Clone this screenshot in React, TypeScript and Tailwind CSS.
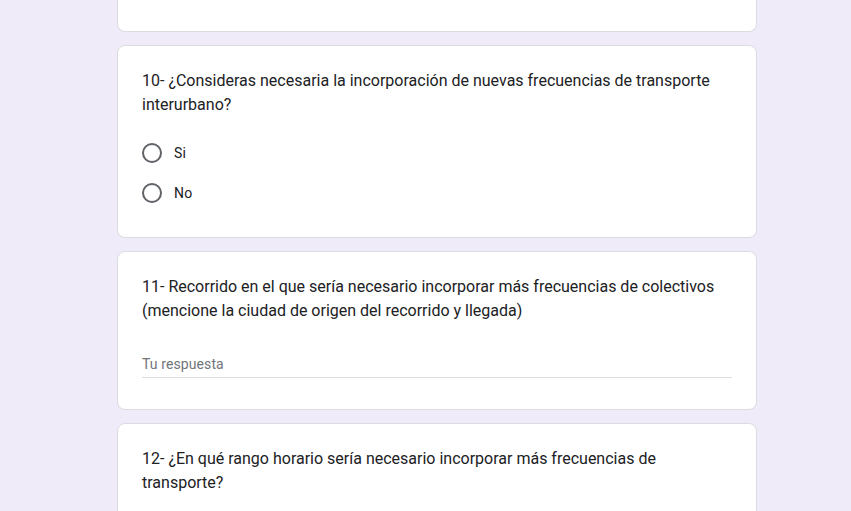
import React from "react";

function Card({ children, className = "" }: { children: React.ReactNode; className?: string }) {
  return (
    <div className={`w-[640px] rounded-lg border border-[#dadce0] bg-white px-6 ${className}`}>
      {children}
    </div>
  );
}

function Title({ children }: { children: React.ReactNode }) {
  return <div className="text-[16px] leading-6 tracking-[0px] text-[#202124]">{children}</div>;
}

function Radio({ label }: { label: string }) {
  return (
    <div className="flex h-10 items-center">
      <div className="h-5 w-5 rounded-full border-2 border-[#5f6368]" />
      <span className="ml-3 text-[14px] tracking-[0.2px] text-[#202124]">{label}</span>
    </div>
  );
}

export default function App() {
  return (
    <div
      className="min-h-[511px] w-full bg-[#f0ebf8] pl-[117px]"
      style={{ fontFamily: "Roboto, 'Liberation Sans', sans-serif" }}
    >
      <div className="flex flex-col gap-[13px]">
        {/* previous card, cut off by the top edge */}
        <div className="h-[32px] w-[640px] rounded-b-lg border-x border-b border-[#dadce0] bg-white" />

        <Card className="pt-[23px] pb-6">
          <Title>
            10- ¿Consideras necesaria la incorporación de nuevas frecuencias de transporte interurbano?
          </Title>
          <div className="mt-4 flex flex-col">
            <Radio label="Si" />
            <Radio label="No" />
          </div>
        </Card>

        <Card className="pt-[23px] pb-[31px]">
          <Title>
            11- Recorrido en el que sería necesario incorporar más frecuencias de colectivos (mencione la
            ciudad de origen del recorrido y llegada)
          </Title>
          <div className="mt-[31px] border-b border-[#dadce0] pb-[3px] text-[14px] leading-5 tracking-[0.1px] text-[#70757a]">
            Tu respuesta
          </div>
        </Card>

        <Card className="pt-[23px] pb-6">
          <Title>
            12- ¿En qué rango horario sería necesario incorporar más frecuencias de transporte?
          </Title>
          <div className="h-10" />
        </Card>
      </div>
    </div>
  );
}
